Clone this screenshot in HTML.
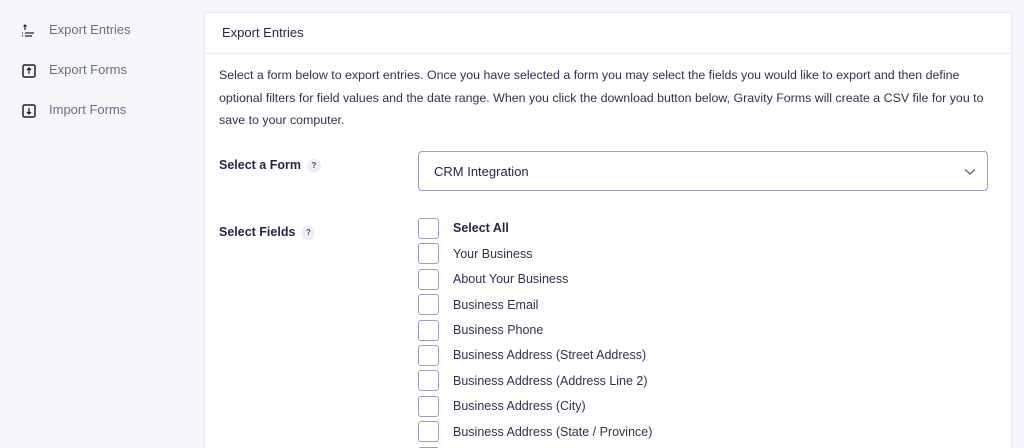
<!DOCTYPE html>
<html><head><style>
*{box-sizing:border-box;margin:0;padding:0}
html,body{width:1024px;height:448px;overflow:hidden}
body{background:#f6f7fb;font-family:"Liberation Sans",sans-serif;color:#242748;position:relative}
.nav{position:absolute;left:22px;font-size:13px;color:#6b6d85}
.nav span{position:absolute;left:27px;top:0;white-space:nowrap}
.panel{position:absolute;left:204px;top:12px;width:808px;height:440px;background:#fff;border:1px solid #e6e7ef;border-radius:3px;overflow:hidden}
.hd{height:41px;border-bottom:1px solid #e9eaf0;padding:12px 0 0 17px;font-size:13px;color:#242748}
.desc{position:absolute;left:14px;top:51px;width:775px;font-size:12.4px;line-height:22.5px;color:#2f3250}
.lbl{position:absolute;left:14px;font-size:12.5px;font-weight:bold;color:#242748}
.q{display:inline-block;width:14px;height:14px;border-radius:7px;background:#ecedf5;font-size:8px;text-align:center;line-height:14px;margin-left:6px;vertical-align:1px;color:#555}
.sel{position:absolute;left:213px;top:138px;width:570px;height:40px;border:1px solid #9c9dc3;border-radius:4px;font-size:13px;padding:12px 0 0 15px;color:#242748}
.cb{position:absolute;left:213px;width:21px;height:21px;border:1px solid #9c9dc3;border-radius:3px;background:#fff}
.ct{position:absolute;left:248px;font-size:12.5px;color:#2f3250;white-space:nowrap}
</style></head><body>
<div class="nav" style="top:22px"><svg width="12" height="14" viewBox="0 0 12 14" style="position:absolute;left:0;top:2px"><path d="M3 1v5M1.5 2.5L3 1l1.5 1.5" stroke="#222" fill="none" stroke-width="1.2"/><path d="M0 9h1M3 9h9M0 12h1M3 12h7" stroke="#222" stroke-width="1.2"/></svg><span>Export Entries</span></div>
<div class="nav" style="top:62px"><svg width="14" height="14" viewBox="0 0 14 14" style="position:absolute;left:0;top:2px"><rect x="1" y="1" width="12" height="12" rx="1.5" fill="none" stroke="#222" stroke-width="1.5"/><path d="M7 10V4M5 6l2-2 2 2" stroke="#222" fill="none" stroke-width="1.3"/></svg><span>Export Forms</span></div>
<div class="nav" style="top:102px"><svg width="14" height="14" viewBox="0 0 14 14" style="position:absolute;left:0;top:2px"><rect x="1" y="1" width="12" height="12" rx="1.5" fill="none" stroke="#222" stroke-width="1.5"/><path d="M7 4v6M5 8l2 2 2-2" stroke="#222" fill="none" stroke-width="1.3"/></svg><span>Import Forms</span></div>
<div class="panel">
<div class="hd">Export Entries</div>
<div class="desc">Select a form below to export entries. Once you have selected a form you may select the fields you would like to export and then define<br>optional filters for field values and the date range. When you click the download button below, Gravity Forms will create a CSV file for you to<br>save to your computer.</div>
<div class="lbl" style="top:145px">Select a Form<span class="q">?</span></div>
<div class="sel">CRM Integration<svg width="12" height="8" viewBox="0 0 12 8" style="position:absolute;right:11px;top:16px"><path d="M1 1.5l5 4.5 5-4.5" stroke="#666" fill="none" stroke-width="1.3"/></svg></div>
<div class="lbl" style="top:212px">Select Fields<span class="q">?</span></div>
<div class="cb" style="top:205px"></div><div class="ct" style="top:208px;font-weight:bold;color:#242748">Select All</div>
<div class="cb" style="top:230px"></div><div class="ct" style="top:234px">Your Business</div>
<div class="cb" style="top:256px"></div><div class="ct" style="top:259px">About Your Business</div>
<div class="cb" style="top:281px"></div><div class="ct" style="top:285px">Business Email</div>
<div class="cb" style="top:307px"></div><div class="ct" style="top:310px">Business Phone</div>
<div class="cb" style="top:332px"></div><div class="ct" style="top:335px">Business Address (Street Address)</div>
<div class="cb" style="top:357px"></div><div class="ct" style="top:361px">Business Address (Address Line 2)</div>
<div class="cb" style="top:383px"></div><div class="ct" style="top:386px">Business Address (City)</div>
<div class="cb" style="top:408px"></div><div class="ct" style="top:412px">Business Address (State / Province)</div>
<div class="cb" style="top:434px"></div>
</div>
</body></html>
